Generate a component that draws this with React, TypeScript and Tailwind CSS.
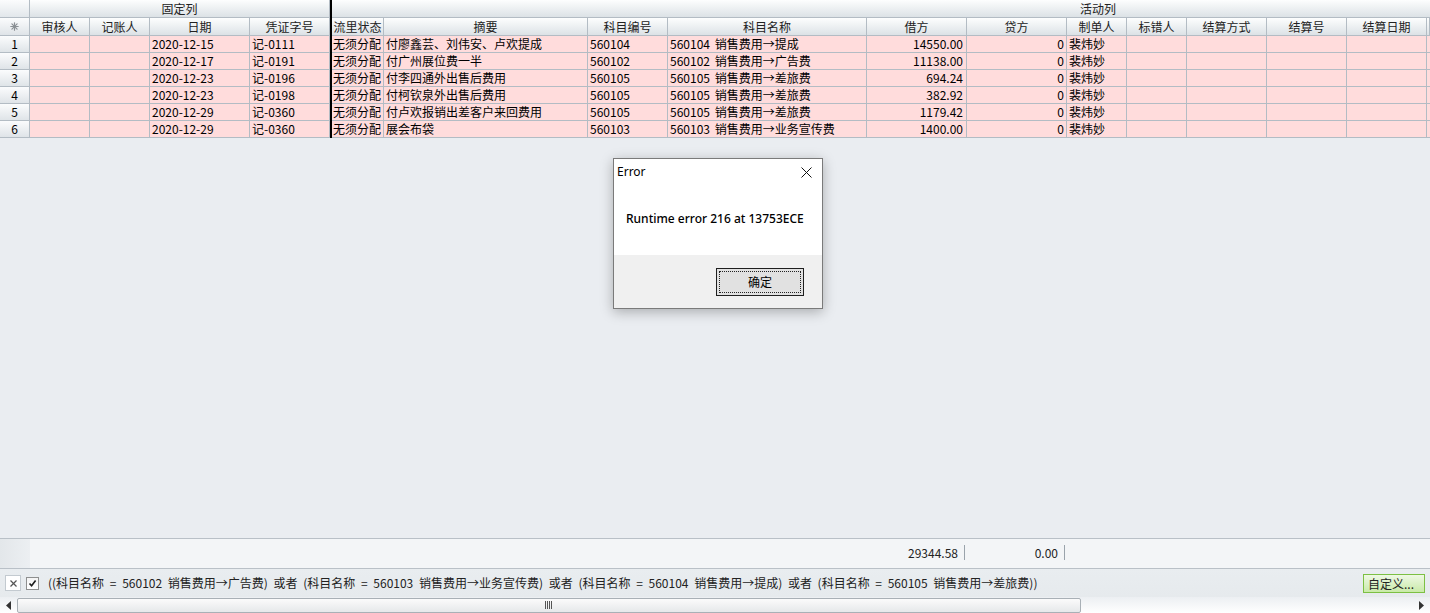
import React from "react";

const FONT = "font-['Noto_Sans_CJK_SC','Liberation_Sans',sans-serif]";

type Col = { title: string; w: string; right?: boolean; center?: boolean };

const leftCols: Col[] = [
  { title: "审核人", w: "w-[60px]" },
  { title: "记账人", w: "w-[60px]" },
  { title: "日期", w: "w-[100px]" },
  { title: "凭证字号", w: "w-[80px]" },
];

const rightCols: Col[] = [
  { title: "流里状态", w: "w-[52px]" },
  { title: "摘要", w: "w-[204px]" },
  { title: "科目编号", w: "w-[80px]" },
  { title: "科目名称", w: "w-[199px]" },
  { title: "借方", w: "w-[100px]", right: true },
  { title: "贷方", w: "w-[100px]", right: true },
  { title: "制单人", w: "w-[60px]" },
  { title: "标错人", w: "w-[60px]" },
  { title: "结算方式", w: "w-[80px]" },
  { title: "结算号", w: "w-[80px]" },
  { title: "结算日期", w: "w-[80px]" },
  { title: "", w: "flex-1 min-w-0" },
];

const rows = [
  ["2020-12-15", "记-0111", "付廖鑫芸、刘伟安、卢欢提成", "560104", "560104 销售费用→提成", "14550.00"],
  ["2020-12-17", "记-0191", "付广州展位费一半", "560102", "560102 销售费用→广告费", "11138.00"],
  ["2020-12-23", "记-0196", "付李四通外出售后费用", "560105", "560105 销售费用→差旅费", "694.24"],
  ["2020-12-23", "记-0198", "付柯钦泉外出售后费用", "560105", "560105 销售费用→差旅费", "382.92"],
  ["2020-12-29", "记-0360", "付卢欢报销出差客户来回费用", "560105", "560105 销售费用→差旅费", "1179.42"],
  ["2020-12-29", "记-0360", "展会布袋", "560103", "560103 销售费用→业务宣传费", "1400.00"],
];

const HEAD =
  "h-[18px] shrink-0 box-border border-r border-b border-[#b3bcc4] bg-linear-to-b from-[#fdfefe] to-[#dce2e6] text-center text-[12px] leading-[17px] text-[#222] whitespace-nowrap overflow-hidden";
const CELL =
  "h-[17px] shrink-0 box-border border-r border-b border-[#b3bcc4] bg-[#ffdcdc] text-[12px] leading-[16px] text-black px-[2px] whitespace-nowrap overflow-hidden [word-spacing:2px]";
const IND =
  "w-[30px] shrink-0 box-border border-r border-b border-[#b3bcc4] bg-linear-to-b from-[#fbfcfd] to-[#dfe4e8] text-center text-[12px] text-black";

function Star() {
  return (
    <svg width="9" height="9" viewBox="0 0 9 9" className="inline-block">
      <g stroke="#8a8f94" strokeWidth="1.2" strokeLinecap="round">
        <line x1="4.5" y1="0.8" x2="4.5" y2="8.2" />
        <line x1="0.8" y1="4.5" x2="8.2" y2="4.5" />
        <line x1="1.9" y1="1.9" x2="7.1" y2="7.1" />
        <line x1="7.1" y1="1.9" x2="1.9" y2="7.1" />
      </g>
    </svg>
  );
}

function LeftTable() {
  return (
    <div className="flex flex-col shrink-0">
      <div className="flex">
        <div className={`${IND} h-[18px] from-[#fbfcfd] to-[#e2e7eb]`} />
        <div className={`${HEAD} w-[300px]`}>固定列</div>
      </div>
      <div className="flex">
        <div className={`${IND} h-[18px] flex items-center justify-center`}>
          <Star />
        </div>
        {leftCols.map((c) => (
          <div key={c.title} className={`${HEAD} ${c.w}`}>
            {c.title}
          </div>
        ))}
      </div>
      {rows.map((r, i) => (
        <div key={i} className="flex">
          <div className={`${IND} h-[17px] leading-[16px]`}>{i + 1}</div>
          <div className={`${CELL} w-[60px]`} />
          <div className={`${CELL} w-[60px]`} />
          <div className={`${CELL} w-[100px]`}>{r[0]}</div>
          <div className={`${CELL} w-[80px]`}>{r[1]}</div>
        </div>
      ))}
    </div>
  );
}

function RightTable() {
  return (
    <div className="flex flex-col flex-1 min-w-0 overflow-hidden">
      <div className="flex">
        <div className={`${HEAD} flex-1 text-left pl-[748px] border-r-0`}>活动列</div>
      </div>
      <div className="flex">
        {rightCols.map((c, i) => (
          <div key={i} className={`${HEAD} ${c.w}`}>
            {c.title}
          </div>
        ))}
      </div>
      {rows.map((r, i) => {
        const vals = ["无须分配", r[2], r[3], r[4], r[5], "0", "裴炜妙", "", "", "", "", ""];
        return (
          <div key={i} className="flex">
            {rightCols.map((c, j) => (
              <div
                key={j}
                className={`${CELL} ${c.w} ${c.right ? "text-right" : ""} ${j === 0 ? "pl-[1px]" : ""} ${
                  j === 4 ? "pr-[3px]" : ""
                }`}
              >
                {vals[j]}
              </div>
            ))}
          </div>
        );
      })}
    </div>
  );
}

function ErrorDialog() {
  return (
    <div className="absolute left-[613px] top-[158px] w-[210px] h-[151px] box-border border border-[#7a7a7a] bg-white shadow-[0_3px_12px_rgba(0,0,0,0.28)] flex flex-col font-['Noto_Sans','Liberation_Sans',sans-serif]">
      <div className="h-[26px] flex items-center justify-between pl-[3px] pr-[10px]">
        <span className="text-[12px] text-black leading-none">Error</span>
        <svg width="11" height="11" viewBox="0 0 11 11">
          <g stroke="#111" strokeWidth="1">
            <line x1="0.5" y1="0.5" x2="10.5" y2="10.5" />
            <line x1="10.5" y1="0.5" x2="0.5" y2="10.5" />
          </g>
        </svg>
      </div>
      <div className="h-[70px] flex items-center pl-[12px] pb-[3px]">
        <span className="text-[12px] font-medium text-black">Runtime error 216 at 13753ECE</span>
      </div>
      <div className="flex-1 bg-[#f0f0f0] flex justify-end items-start pt-[13px] pr-[18px]">
        <div className="w-[88px] h-[28px] box-border border border-[#1f1f1f] bg-[#e1e1e1] p-[2px]">
          <div className={`w-full h-full box-border border border-dotted border-[#222] flex items-center justify-center text-[12px] text-black ${FONT}`}>
            确定
          </div>
        </div>
      </div>
    </div>
  );
}

export default function App() {
  return (
    <div className={`relative w-[1430px] h-[613px] overflow-hidden flex flex-col bg-[#eaedf0] ${FONT}`}>
      {/* main grid */}
      <div className="flex flex-col h-[538px] shrink-0">
        <div className="flex shrink-0">
          <LeftTable />
          <div className="w-[2px] shrink-0 bg-black" />
          <RightTable />
        </div>
        <div className="flex-1 bg-[#eaedf1]" />
      </div>

      {/* sum row */}
      <div className="h-[30px] shrink-0 box-border border-t border-[#b9c0c7] flex bg-[#f3f5f7]">
        <div className="w-[30px] shrink-0 bg-linear-to-r from-[#e3e7ea] to-[#eceff2]" />
        <div className="w-[837px] shrink-0" />
        <div className="w-[97px] shrink-0 text-right pr-[6px] text-[12px] leading-[28px] text-[#222]">29344.58</div>
        <div className="w-px h-[15px] mt-[6px] bg-[#9aa3ab] shrink-0" />
        <div className="w-[99px] shrink-0 text-right pr-[6px] text-[12px] leading-[28px] text-[#222]">0.00</div>
        <div className="w-px h-[15px] mt-[6px] bg-[#9aa3ab] shrink-0" />
      </div>

      {/* filter bar */}
      <div className="h-[29px] shrink-0 box-border border-t border-[#b9c0c7] flex items-center bg-linear-to-b from-[#e9edf0] to-[#e6eaed]">
        <div className="ml-[5px] w-[16px] h-[16px] box-border border border-[#c3cad0] bg-white flex items-center justify-center">
          <svg width="7" height="7" viewBox="0 0 7 7">
            <g stroke="#555" strokeWidth="1.3">
              <line x1="0.5" y1="0.5" x2="6.5" y2="6.5" />
              <line x1="6.5" y1="0.5" x2="0.5" y2="6.5" />
            </g>
          </svg>
        </div>
        <div className="ml-[5px] w-[13px] h-[13px] box-border border border-[#8e8f8f] bg-linear-to-b from-[#f4f4f4] to-[#ffffff] flex items-center justify-center">
          <svg width="9" height="9" viewBox="0 0 9 9">
            <path d="M1.5 4.5 L3.6 6.8 L7.6 1.5" fill="none" stroke="#1c1c1c" strokeWidth="1.6" />
          </svg>
        </div>
        <div className="ml-[9px] text-[12px] text-[#222] whitespace-nowrap [word-spacing:3px]">
          ((科目名称 = 560102 销售费用→广告费) 或者 (科目名称 = 560103 销售费用→业务宣传费) 或者 (科目名称 = 560104 销售费用→提成) 或者 (科目名称 = 560105 销售费用→差旅费))
        </div>
        <div className="ml-auto mr-[5px] w-[62px] h-[19px] box-border border border-[#7cc043] bg-linear-to-b from-[#eef8e4] to-[#c9eaa8] text-[12px] leading-[17px] pl-[4px] text-[#222] whitespace-nowrap">
          自定义...
        </div>
      </div>

      {/* scroll bar */}
      <div className="h-[16px] shrink-0 flex items-center bg-linear-to-b from-[#eceff2] to-[#ffffff]">
        <div className="w-[17px] shrink-0 flex justify-center">
          <svg width="5" height="9" viewBox="0 0 5 9">
            <path d="M5 0 L0 4.5 L5 9 Z" fill="#333" />
          </svg>
        </div>
        <div className="w-[1064px] h-[15px] shrink-0 box-border border border-[#a9b0b6] rounded-[2px] bg-linear-to-b from-[#fbfbfb] to-[#e6e8ea] flex items-center justify-center">
          <svg width="8" height="8" viewBox="0 0 8 8">
            <g stroke="#555" strokeWidth="1">
              <line x1="0.5" y1="0" x2="0.5" y2="8" />
              <line x1="2.5" y1="0" x2="2.5" y2="8" />
              <line x1="4.5" y1="0" x2="4.5" y2="8" />
              <line x1="6.5" y1="0" x2="6.5" y2="8" />
            </g>
          </svg>
        </div>
        <div className="flex-1" />
        <div className="w-[17px] shrink-0 flex justify-center">
          <svg width="5" height="9" viewBox="0 0 5 9">
            <path d="M0 0 L5 4.5 L0 9 Z" fill="#333" />
          </svg>
        </div>
      </div>

      <ErrorDialog />
    </div>
  );
}
